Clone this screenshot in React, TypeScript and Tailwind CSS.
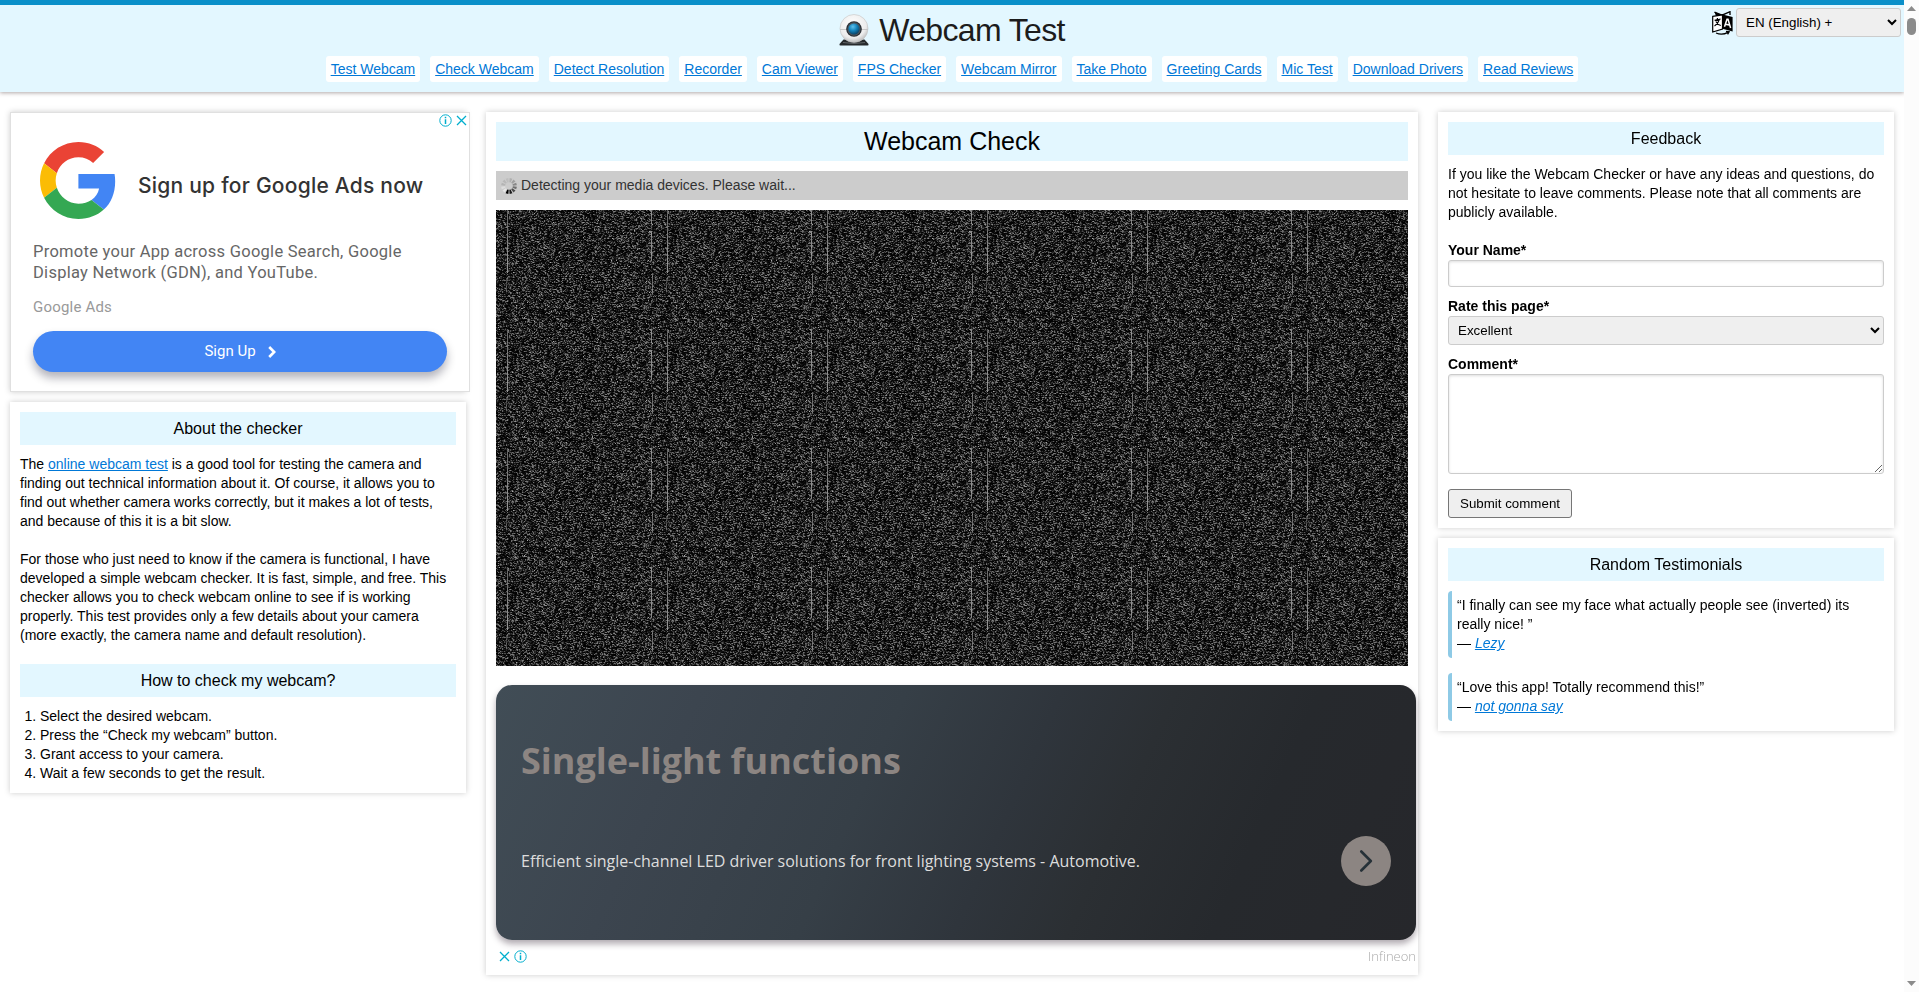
import { useEffect, useRef } from 'react';
import type { ReactNode } from 'react';

const NAV = [
  'Test Webcam',
  'Check Webcam',
  'Detect Resolution',
  'Recorder',
  'Cam Viewer',
  'FPS Checker',
  'Webcam Mirror',
  'Take Photo',
  'Greeting Cards',
  'Mic Test',
  'Download Drivers',
  'Read Reviews',
];

function WebcamLogo() {
  return (
    <svg width="30" height="32" viewBox="0 0 30 32">
      <defs>
        <radialGradient id="shell" cx="45%" cy="35%" r="65%">
          <stop offset="0" stopColor="#ffffff" />
          <stop offset="0.75" stopColor="#ececec" />
          <stop offset="1" stopColor="#bdbdbd" />
        </radialGradient>
        <radialGradient id="lens" cx="40%" cy="30%" r="70%">
          <stop offset="0" stopColor="#5fc0ea" />
          <stop offset="0.5" stopColor="#1585bd" />
          <stop offset="1" stopColor="#0a4468" />
        </radialGradient>
      </defs>
      <path d="M4.500 25.500h21l4 4.500q.4 1.500-1 1.500H1.500q-1.400 0-1-1.500z" fill="#26292b" />
      <ellipse cx="15" cy="14.500" rx="14" ry="14" fill="url(#shell)" stroke="#c4c4c4" strokeWidth="0.600" />
      <path d="M4 28.500q11 2 22 0" fill="none" stroke="#6d7174" strokeWidth="0.800" />
      <path d="M1.200 15.500h27.600" stroke="#bcbcbc" strokeWidth="0.800" />
      <circle cx="15" cy="15" r="7.800" fill="#272c31" />
      <circle cx="15" cy="15" r="6.700" fill="#4a545c" />
      <circle cx="15" cy="15" r="5.600" fill="url(#lens)" />
    </svg>
  );
}

function TranslateIcon() {
  return (
    <svg width="21" height="24" viewBox="0 0 21 24">
      <path d="M2.500 1.200 10 4.200 18 0.700V4" fill="none" stroke="#000" strokeWidth="1.300" />
      <path d="M2.500 1 10 4 4 5z" fill="#000" />
      <path d="M0.700 5.400 10.500 3.800V18L0.700 21z" fill="#fff" stroke="#000" strokeWidth="1.200" />
      <path d="M10.500 3.600 20.600 6V20.400L10.500 17.800z" fill="#000" />
      <path d="M2.600 9.300 8.600 8M5.400 7v1.500M7.300 8.600Q6 13 2.500 15M3.800 10.500Q6 14 8.800 14.500" fill="none" stroke="#000" strokeWidth="1.200" />
      <path d="M12.500 15.800 15 8.300h1l2.600 8.700M13.400 13.200l4 .7" fill="none" stroke="#fff" strokeWidth="1.500" />
      <path d="M4 22q6 2.600 12-.6M14 20.400l3.200.4-1.600 2.600" fill="none" stroke="#000" strokeWidth="1.200" />
    </svg>
  );
}

function Spinner() {
  const tones = ['#b0b0b0', '#a0a0a0', '#888888', '#707070', '#4a4a4a', '#1c1c1c', '#000000', '#e6e6e6', '#dedede', '#b4b4b4', '#b8b8b8', '#bebebe'];
  return (
    <svg width="16" height="16" viewBox="-8 -8 16 16">
      {tones.map((tone, i) => (
        <path key={i} d="M-.7-3.800-1.400-7.800H1.400L.7-3.800z" fill={tone} transform={`rotate(${i * 30 + 15})`} />
      ))}
    </svg>
  );
}

function GoogleLogo() {
  return (
    <svg width="76" height="77" viewBox="0 0 47.500 48">
      <path fill="#EA4335" d="M24 9.500c3.540 0 6.710 1.220 9.210 3.600l6.850-6.850C35.900 2.380 30.470 0 24 0 14.620 0 6.510 5.380 2.560 13.220l7.980 6.190C12.430 13.720 17.740 9.500 24 9.500z" />
      <path fill="#4285F4" d="M46.980 24.550c0-1.570-.15-3.090-.38-4.550H24v9.020h12.940c-.58 2.960-2.260 5.480-4.780 7.180l7.730 6c4.510-4.180 7.090-10.360 7.090-17.650z" />
      <path fill="#FBBC05" d="M10.530 28.590c-.48-1.450-.76-2.990-.76-4.590s.27-3.140.76-4.590l-7.980-6.190C.92 16.460 0 20.120 0 24c0 3.880.92 7.540 2.560 10.780l7.970-6.190z" />
      <path fill="#34A853" d="M24 48c6.480 0 11.930-2.130 15.890-5.810l-7.730-6c-2.150 1.450-4.920 2.300-8.160 2.300-6.260 0-11.570-4.220-13.470-9.910l-7.980 6.190C6.510 42.620 14.620 48 24 48z" />
    </svg>
  );
}

function InfoIcon() {
  return (
    <svg width="13" height="13" viewBox="0 0 13 13" fill="none" stroke="#00aecd">
      <circle cx="6.500" cy="6.500" r="5.700" strokeWidth="1" />
      <path d="M6.500 5.300v4.700M6.500 2.800v1.500" strokeWidth="1.500" />
    </svg>
  );
}

function CloseIcon() {
  return (
    <svg width="11" height="13" viewBox="0 0 11 13" fill="none" stroke="#00aecd" strokeWidth="1.300">
      <path d="M1 2l9 9M10 2l-9 9" />
    </svg>
  );
}

const TILE_W = 160;
const TILE_H = 119;

function makeTile() {
  const tile = document.createElement('canvas');
  tile.width = TILE_W;
  tile.height = TILE_H;
  const ctx = tile.getContext('2d')!;
  const img = ctx.createImageData(TILE_W, TILE_H);
  let seed = 20117;
  const rand = () => {
    seed ^= seed << 13;
    seed ^= seed >>> 17;
    seed ^= seed << 5;
    return (seed >>> 0) / 4294967296;
  };
  let prev = 40;
  for (let y = 0; y < TILE_H; y++) {
    for (let x = 0; x < TILE_W; x++) {
      const fresh = rand() < 0.28 ? rand() * 8 : Math.pow(rand(), 1.9) * 150;
      let v = fresh * 0.8 + prev * 0.2;
      prev = fresh;
      if (rand() < 0.006) v = 120 + rand() * 60;
      if (x === 11 && y < 63) v = 90 + y * 0.9 + rand() * 20;
      if (x === 155 && (y < 14 || (y > 20 && y < 51))) v = 125 + rand() * 35;
      if (x === 156 && y > 62 && y < 84) v = 95 + rand() * 50;
      if (x === 10 && y > 68 && y < 82) v = 60 + rand() * 60;
      const i = (y * TILE_W + x) * 4;
      img.data[i] = v;
      img.data[i + 1] = v;
      img.data[i + 2] = v;
      img.data[i + 3] = 255;
    }
  }
  ctx.putImageData(img, 0, 0);
  return tile;
}

function StaticNoise() {
  const ref = useRef<HTMLCanvasElement>(null);
  useEffect(() => {
    const ctx = ref.current!.getContext('2d')!;
    ctx.fillStyle = ctx.createPattern(makeTile(), 'repeat')!;
    ctx.fillRect(0, 0, 912, 456);
  }, []);
  return <canvas ref={ref} width={912} height={456} className="mt-2.5 block h-[456px] w-[912px] bg-black" />;
}

function Card({ children, className = '' }: { children: ReactNode; className?: string }) {
  return <section className={`bg-white p-2.5 shadow-[0_0_6px_#ccc] ${className}`}>{children}</section>;
}

function Band({ children }: { children: ReactNode }) {
  return <h3 className="bg-[#e3f7ff] py-1.5 text-center text-base leading-[21px]">{children}</h3>;
}

function Link({ children }: { children: ReactNode }) {
  return <a className="text-[#0078d7] underline">{children}</a>;
}

function Header() {
  return (
    <header className="flex h-[92px] border-t-[5px] border-[#098fc9] bg-[#e3f7ff] shadow-[0_1px_4px_rgba(80,60,60,0.45)]">
      <div className="flex-1" />
      <div className="flex flex-col items-center pl-[3px]">
        <div className="flex h-[51px] items-center gap-2.5 pb-[2px]">
          <WebcamLogo />
          <h1 className="text-[32px] leading-[36px] tracking-[-0.650px] text-[#1c1c1c]">Webcam Test</h1>
        </div>
        <nav className="flex gap-2.5">
          {NAV.map((item) => (
            <span key={item} className="rounded-[3px] bg-white p-[5px] leading-4 whitespace-nowrap">
              <Link>{item}</Link>
            </span>
          ))}
        </nav>
      </div>
      <div className="flex flex-1 items-start justify-end gap-[3px] pt-[3px] pr-[3px]">
        <div className="pt-[3px]">
          <TranslateIcon />
        </div>
        <select className="h-[29px] w-[165px] rounded-[3px] border border-[#ccc] bg-[#efefef] px-[5px] text-[13.333px]">
          <option>EN (English) +</option>
        </select>
      </div>
    </header>
  );
}

function GoogleAd() {
  return (
    <div className="h-[280px] w-[456px] shadow-[0_0_6px_#ccc]">
      <div className="flex h-[280px] w-[460px] flex-col border border-[#e0e0e0] bg-white pl-[22px]">
        <div className="flex justify-end gap-1 pt-[1px] pr-[2px]">
          <InfoIcon />
          <CloseIcon />
        </div>
        <div className="flex items-center pt-[15px] pl-[7px]">
          <GoogleLogo />
          <div className="pt-2.5 pl-[22px] font-['Inter'] text-[21px] leading-7 font-medium tracking-[0.230px] whitespace-nowrap text-[#333]">
            Sign up for Google Ads now
          </div>
        </div>
        <p className="pt-[22px] font-['Roboto'] text-[16.500px] leading-[21px] tracking-[0.270px] whitespace-nowrap text-[#666]">
          Promote your App across Google Search, Google
          <br />
          Display Network (GDN), and YouTube.
        </p>
        <p className="pt-[14px] font-['Roboto'] text-[15px] leading-5 tracking-[0.200px] text-[#999]">Google Ads</p>
        <div className="mt-[14px] flex h-[41px] w-[414px] items-center justify-center gap-[12px] rounded-full bg-[#4285f4] font-['Roboto'] text-[15px] text-white shadow-[0_6px_10px_rgba(0,0,30,0.3)]">
          Sign Up
          <svg width="8" height="12" viewBox="0 0 8 12" fill="none" stroke="#fff" strokeWidth="2.600">
            <path d="M1.200 1l5 5-5 5" />
          </svg>
        </div>
      </div>
    </div>
  );
}

function LedAd() {
  return (
    <div className="mt-[19px] w-[920px] font-['Open_Sans']">
      <div className="flex h-[255px] flex-col rounded-[16px] bg-[linear-gradient(114deg,#414d56_0%,#3c454f_20%,#363f47_40%,#2f353c_55%,#2b2f33_66%,#26292d_80%,#26272b_100%)] pr-[25px] pl-[25px] shadow-[0_4px_6px_rgba(60,45,60,0.4)]">
        <div className="pt-[51px] text-[36px] leading-[50px] font-bold text-[#8c8582]">Single-light functions</div>
        <div className="flex items-center justify-between pt-[50px]">
          <span className="text-base text-[#ddd]">Efficient single-channel LED driver solutions for front lighting systems - Automotive.</span>
          <span className="flex h-[50px] w-[50px] items-center justify-center rounded-full bg-[#8c8582]">
            <svg width="14" height="22" viewBox="0 0 14 22" fill="none" stroke="#263138" strokeWidth="2.600" strokeLinecap="round" strokeLinejoin="round">
              <path d="M2.300 1.500l9.500 9.500-9.500 9.500" />
            </svg>
          </span>
        </div>
      </div>
      <div className="flex h-[25px] items-center pt-[8px] pl-[3px]">
        <CloseIcon />
        <span className="ml-[4px]">
          <InfoIcon />
        </span>
        <span className="ml-auto text-[13px] font-light text-[#aaa]">Infineon</span>
      </div>
    </div>
  );
}

function Scrollbar() {
  return (
    <div className="flex h-full w-[15px] flex-col items-center justify-between bg-[#fcfcfc] pt-[6px] pb-[6px]">
      <div className="flex flex-col items-center gap-[7px]">
        <svg width="9" height="5" viewBox="0 0 9 5">
          <path d="M0 5l4.500-5L9 5z" fill="#8b8b8b" />
        </svg>
        <div className="h-[17px] w-[9px] rounded-full bg-[#8b8b8b]" />
      </div>
      <svg width="9" height="5" viewBox="0 0 9 5">
        <path d="M0 0l4.500 5L9 0z" fill="#8b8b8b" />
      </svg>
    </div>
  );
}

const FIELD = 'block w-full rounded-[3px] border border-[#ccc] bg-white shadow-[inset_0_1px_3px_#ddd]';

export default function App() {
  return (
    <div className="flex h-[992px] w-[1919px] overflow-hidden bg-white font-['Liberation_Sans',Arial,sans-serif] text-sm leading-[19px] text-black">
      <div className="w-[1904px]">
        <Header />
        <main className="flex items-start gap-5 px-2.5 pt-5">
          <div className="flex w-[456px] flex-col gap-2.5">
            <GoogleAd />
            <Card>
              <Band>About the checker</Band>
              <p className="pt-2.5">
                The <Link>online webcam test</Link> is a good tool for testing the camera and finding out technical information about it. Of course, it allows you to find out whether camera works correctly, but it makes a lot of tests, and because of this it is a bit slow.
              </p>
              <p className="py-[19px]">
                For those who just need to know if the camera is functional, I have developed a simple webcam checker. It is fast, simple, and free. This checker allows you to check webcam online to see if is working properly. This test provides only a few details about your camera (more exactly, the camera name and default resolution).
              </p>
              <Band>How to check my webcam?</Band>
              <ol className="list-decimal pt-2.5 pl-5">
                <li>Select the desired webcam.</li>
                <li>Press the “Check my webcam” button.</li>
                <li>Grant access to your camera.</li>
                <li>Wait a few seconds to get the result.</li>
              </ol>
            </Card>
          </div>

          <Card className="h-[863px] w-[932px]">
            <h2 className="bg-[#e3f7ff] py-1 text-center text-[25px] leading-[31px]">Webcam Check</h2>
            <div className="mt-2.5 flex h-[29px] items-center gap-1 bg-[#ccc] pl-[5px] text-[#333]">
              <Spinner />
              Detecting your media devices. Please wait...
            </div>
            <StaticNoise />
            <LedAd />
          </Card>

          <div className="flex w-[456px] flex-col gap-2.5">
            <Card>
              <Band>Feedback</Band>
              <p className="pt-2.5 pb-[19px]">
                If you like the Webcam Checker or have any ideas and questions, do not hesitate to leave comments. Please note that all comments are publicly available.
              </p>
              <label className="block font-bold">Your Name*</label>
              <input className={`${FIELD} h-[27px]`} />
              <label className="mt-2.5 block font-bold">Rate this page*</label>
              <select className="block h-[29px] w-full rounded-[3px] border border-[#ccc] bg-[#efefef] px-[5px] text-[13.333px]">
                <option>Excellent</option>
              </select>
              <label className="mt-2.5 block font-bold">Comment*</label>
              <textarea className={`${FIELD} h-[100px]`} />
              <button className="mt-[15px] block h-[29px] w-[124px] rounded-[3px] border border-[#767676] bg-[#efefef] text-[13.333px]">Submit comment</button>
            </Card>
            <Card>
              <Band>Random Testimonials</Band>
              <blockquote className="mt-2.5 rounded-[4px] border-l-4 border-[#8ecae6] p-[5px]">
                “I finally can see my face what actually people see (inverted) its really nice! ”
                <br />— <cite><Link>Lezy</Link></cite>
              </blockquote>
              <blockquote className="mt-[15px] rounded-[4px] border-l-4 border-[#8ecae6] p-[5px]">
                “Love this app! Totally recommend this!”
                <br />— <cite><Link>not gonna say</Link></cite>
              </blockquote>
            </Card>
          </div>
        </main>
      </div>
      <Scrollbar />
    </div>
  );
}
